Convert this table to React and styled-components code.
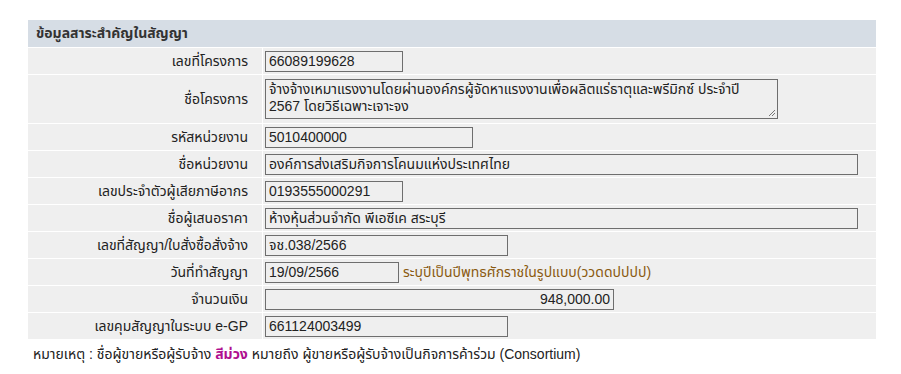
import React from "react";
import styled, { createGlobalStyle } from "styled-components";

const Global = createGlobalStyle`
  html, body { margin: 0; padding: 0; background: #fff; }
  body {
    font-family: Tahoma, "Liberation Sans", "Noto Sans Thai", "Noto Sans", sans-serif;
    font-size: 14px;
    color: #222;
  }
`;

const Page = styled.div`
  padding: 20px 0 0 28px;
  width: 848px;
`;

const Sheet = styled.div`
  display: grid;
  grid-template-columns: 234px 1fr;
  gap: 1px;
  background: #fff;
`;

const Heading = styled.div`
  grid-column: 1 / -1;
  height: 27px;
  display: flex;
  align-items: center;
  padding-left: 8px;
  background: #d6dde5;
  font-weight: bold;
  color: #333;
`;

const Label = styled.div`
  background: #efefef;
  height: ${(p) => p.$h || 26}px;
  display: flex;
  align-items: center;
  justify-content: flex-end;
  padding-right: 14px;
  color: #222;
`;

const Value = styled.div`
  background: #efefef;
  height: ${(p) => p.$h || 26}px;
  display: flex;
  align-items: center;
  padding-left: 2px;
  gap: 4px;
`;

const Field = styled.div`
  box-sizing: border-box;
  width: ${(p) => p.$w}px;
  height: 21px;
  border: 1px solid #6e6e6e;
  padding: 0 3px;
  display: flex;
  align-items: center;
  justify-content: ${(p) => (p.$right ? "flex-end" : "flex-start")};
  white-space: nowrap;
  background: #efefef;
  color: #222;
`;

const Area = styled.div`
  position: relative;
  box-sizing: border-box;
  width: 513px;
  height: 40px;
  border: 1px solid #6e6e6e;
  padding: 1px 3px;
  line-height: 17px;
  background: #efefef;
  color: #222;
`;

const Grip = styled.svg`
  position: absolute;
  right: 1px;
  bottom: 1px;
`;

const Hint = styled.span`
  color: #8a5a10;
  white-space: nowrap;
`;

const Note = styled.div`
  padding: 5px 0 0 5px;
  color: #222;
`;

const Purple = styled.span`
  color: #b0108f;
  font-weight: bold;
`;

export default function App() {
  return (
    <>
      <Global />
      <Page>
        <Sheet>
          <Heading>ข้อมูลสาระสำคัญในสัญญา</Heading>

          <Label>เลขที่โครงการ</Label>
          <Value><Field $w={138}>66089199628</Field></Value>

          <Label $h={48}>ชื่อโครงการ</Label>
          <Value $h={48}>
            <Area>
              จ้างจ้างเหมาแรงงานโดยผ่านองค์กรผู้จัดหาแรงงานเพื่อผลิตแร่ธาตุและพรีมิกซ์ ประจำปี 2567 โดยวิธีเฉพาะเจาะจง
              <Grip width="9" height="9" viewBox="0 0 9 9">
                <path d="M8 2 L2 8 M8 5 L5 8" stroke="#777" strokeWidth="1" />
              </Grip>
            </Area>
          </Value>

          <Label>รหัสหน่วยงาน</Label>
          <Value><Field $w={208}>5010400000</Field></Value>

          <Label>ชื่อหน่วยงาน</Label>
          <Value><Field $w={593}>องค์การส่งเสริมกิจการโคนมแห่งประเทศไทย</Field></Value>

          <Label>เลขประจำตัวผู้เสียภาษีอากร</Label>
          <Value><Field $w={138}>0193555000291</Field></Value>

          <Label>ชื่อผู้เสนอราคา</Label>
          <Value><Field $w={593}>ห้างหุ้นส่วนจำกัด พีเอซีเค สระบุรี</Field></Value>

          <Label>เลขที่สัญญา/ใบสั่งซื้อสั่งจ้าง</Label>
          <Value><Field $w={243}>จช.038/2566</Field></Value>

          <Label>วันที่ทำสัญญา</Label>
          <Value>
            <Field $w={134}>19/09/2566</Field>
            <Hint>ระบุปีเป็นปีพุทธศักราชในรูปแบบ(ววดดปปปป)</Hint>
          </Value>

          <Label>จำนวนเงิน</Label>
          <Value><Field $w={349} $right>948,000.00</Field></Value>

          <Label>เลขคุมสัญญาในระบบ e-GP</Label>
          <Value><Field $w={243}>661124003499</Field></Value>
        </Sheet>
        <Note>
          หมายเหตุ : ชื่อผู้ขายหรือผู้รับจ้าง <Purple>สีม่วง</Purple> หมายถึง ผู้ขายหรือผู้รับจ้างเป็นกิจการค้าร่วม (Consortium)
        </Note>
      </Page>
    </>
  );
}
